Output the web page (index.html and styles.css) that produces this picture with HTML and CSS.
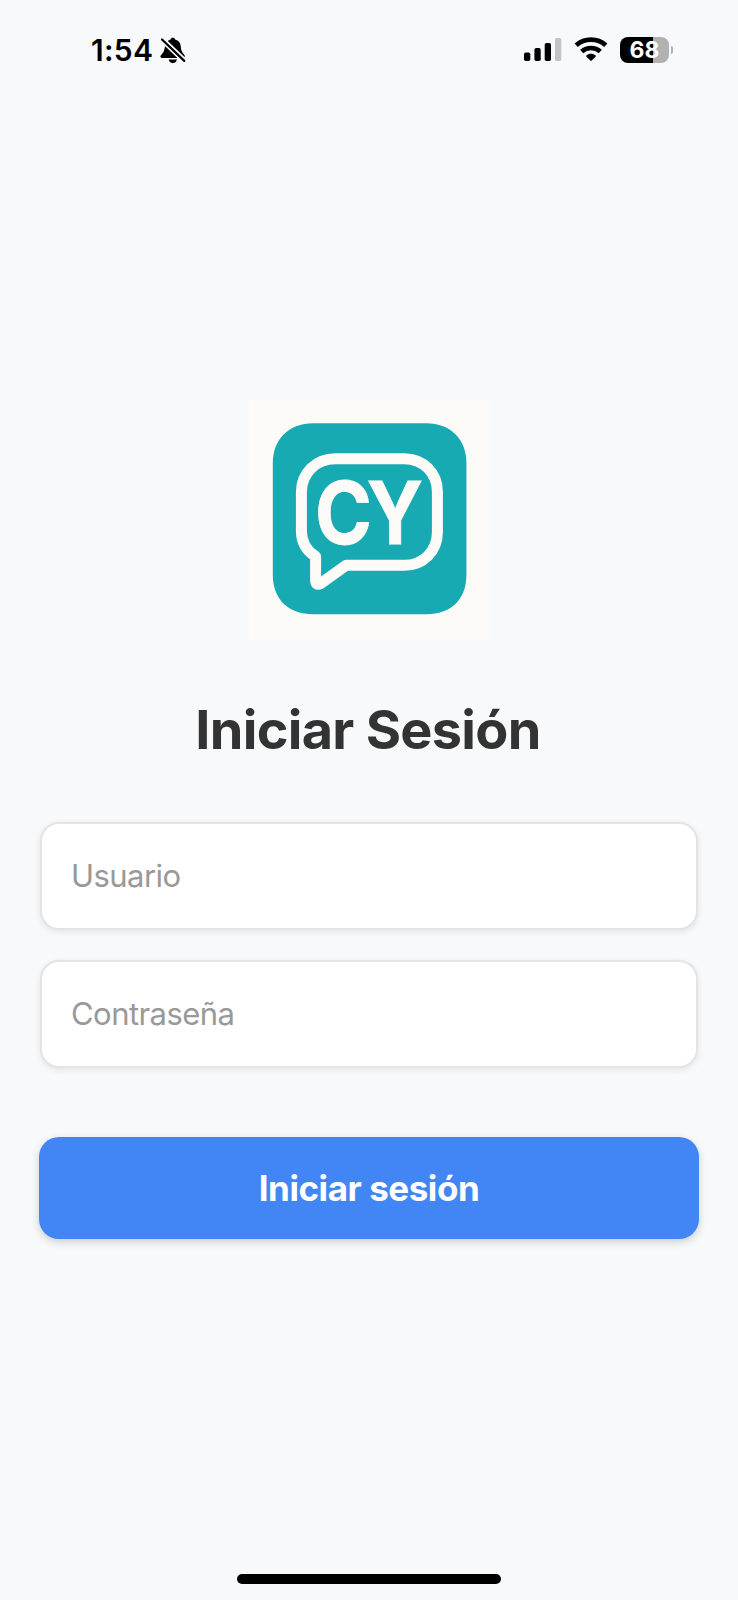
FILE: index.html
```html
<!DOCTYPE html>
<html lang="es">
<head>
<meta charset="utf-8">
<title>Iniciar Sesión</title>
<link rel="stylesheet" href="styles.css">
</head>
<body>
<div class="screen">
  <header class="status">
    <div class="status-left">
      <span class="clock">1:54</span>
      <svg class="bell" width="26" height="28" viewBox="0 0 26 28">
        <path d="M3 21C0 21 0 19.4 1.2 18C4.3 14.800 4.500 12.500 5 9C5.400 5.500 7.500 3.500 10.300 2.800C10.800 1 11.600 .7 12.800 .7S14.900 1 15.400 2.800C18.500 3.500 20.300 5.500 20.700 9C21.100 13 21.500 14.800 24 17.500C25.500 19.400 25 21 22.500 21Z"/>
        <path d="M8.700 22.600H16.900C16.200 27.300 9.400 27.300 8.700 22.600Z"/>
        <path class="bell-gap" d="M1.500 1.800L25 24.400"/>
        <path class="bell-slash" d="M2 2.500L24.300 23.900"/>
      </svg>
    </div>
    <div class="status-right">
      <svg width="39" height="25" viewBox="0 0 39 25">
        <rect x="0" y="15.500" width="6.300" height="8.500" rx="1.800"/>
        <rect x="10.400" y="11" width="6.300" height="13" rx="1.800"/>
        <rect x="20.700" y="6" width="6.300" height="18" rx="1.800"/>
        <rect class="dim" x="31" y="1" width="6.300" height="23" rx="1.800"/>
      </svg>
      <svg class="wifi" width="34" height="25" viewBox="0 0 34 25">
        <path class="wave" d="M2.200 8.300C10.500 .7 23.500 .7 31.800 8.300"/>
        <path class="wave" d="M7.700 14.600C13 9.800 21 9.800 26.300 14.600"/>
        <path d="M12.300 18.400C15.300 16.100 18.700 16.100 21.700 18.400Q22.200 18.900 21.700 19.400L17.700 23.600Q17 24.200 16.300 23.600L12.300 19.400Q11.800 18.900 12.300 18.400Z"/>
      </svg>
      <div class="battery">
        <div class="battery-body">68</div>
        <div class="battery-cap"></div>
      </div>
    </div>
  </header>
  <main class="login">
    <svg class="logo" width="240" height="240" viewBox="248.800 400 240 240">
      <rect class="logo-paper" x="248.800" y="400" width="240" height="240"/>
      <path class="logo-tile" d="M313 423.300H426C451 423.300 466.200 440 466.200 463V575C466.200 599 451 614.300 426 614.300H313C288 614.300 272.600 599 272.600 575V463C272.600 440 288 423.300 313 423.300Z"/>
      <path class="bubble" d="M335 458.700H404C423 458.700 437.200 473 437.200 492V532C437.200 551 423 565.300 404 565.300H346L320.500 583.400Q315.400 585.800 315.400 580.500V556.500C306 550.500 301.200 542 301.200 531V492C301.200 473 316 458.700 335 458.700Z"/>
      <text class="logo-text" transform="translate(314.800 544.300) scale(.89 1)">CY</text>
    </svg>
    <h1 class="title">Iniciar Sesión</h1>
    <form class="form">
      <div class="field"><span class="hint">Usuario</span></div>
      <div class="field"><span class="hint">Contraseña</span></div>
      <button class="submit" type="button"><span>Iniciar sesión</span></button>
    </form>
  </main>
  <div class="home-bar"></div>
</div>
</body>
</html>
```
FILE: styles.css
```css
* { box-sizing: border-box; }
body { margin: 0; background: #f8f9fb; font-family: Inter, "Liberation Sans", sans-serif; }
.screen { width: 738px; height: 1600px; display: flex; flex-direction: column; align-items: center; }
.status { width: 100%; height: 100px; padding: 36px 64px 0 91px; display: flex; justify-content: space-between; align-items: flex-start; }
.status-left { display: flex; align-items: flex-start; gap: 7px; }
.clock { width: 62px; font-size: 30px; line-height: 29px; font-weight: 600; letter-spacing: 0.3px; white-space: nowrap; }
.bell { margin-top: 1px; }
.bell-gap { stroke: #f8f9fb; stroke-width: 5.500; }
.bell-slash { stroke: #000; stroke-width: 2.200; stroke-linecap: round; }
.status-right { display: flex; align-items: flex-start; padding-top: 1px; }
.dim { fill: #c2c3c5; }
.wifi { margin: 0 12px 0 11px; }
.wave { fill: none; stroke: #000; stroke-width: 4.700; }
.battery { display: flex; align-items: center; gap: 2px; }
.battery-body { width: 49px; height: 26px; border-radius: 8px; background: linear-gradient(90deg, #000 68%, #b1b1b2 68%); color: #fff; font-size: 23px; line-height: 26px; font-weight: 700; text-align: center; }
.battery-cap { width: 2px; height: 8px; margin-right: 1px; border-radius: 0 4px 4px 0; background: #b1b1b2; }
.login { width: 100%; padding: 300px 39px 0; display: flex; flex-direction: column; align-items: center; }
.logo { display: block; }
.logo-paper { fill: #fcfbf8; }
.logo-tile { fill: #17aab2; }
.bubble { fill: none; stroke: #fcfbf8; stroke-width: 11; stroke-linejoin: round; }
.logo-text { fill: #fcfbf8; stroke: #fcfbf8; stroke-width: .8; font: 700 86.5px Inter, sans-serif; letter-spacing: -5.800px; }
.title { margin: 57px 2px 0 0; font-size: 54px; line-height: 66px; font-weight: 700; letter-spacing: -0.7px; color: #333; white-space: nowrap; }
.form { width: 100%; margin-top: 59px; display: flex; flex-direction: column; gap: 30px; }
.field { height: 108px; margin: 0 0 0 1px; width: 658px; padding: 0 29px; display: flex; align-items: center; background: #fff; border: 2px solid #e3e4e6; border-radius: 19px; box-shadow: 0 2px 6px rgba(0,0,0,.09); }
.hint { font-size: 31px; line-height: 40px; color: #999; letter-spacing: -0.55px; white-space: nowrap; }
.submit { height: 102px; margin-top: 39px; padding: 0; border: 0; border-radius: 20px; background: #4285f4; color: #fff; font: 700 35px/40px Inter, sans-serif; letter-spacing: -0.450px; box-shadow: 0 3px 9px rgba(0,0,0,.18); }
.home-bar { width: 264px; height: 10px; margin: auto 0 16px; border-radius: 5px; background: #000; }
```
